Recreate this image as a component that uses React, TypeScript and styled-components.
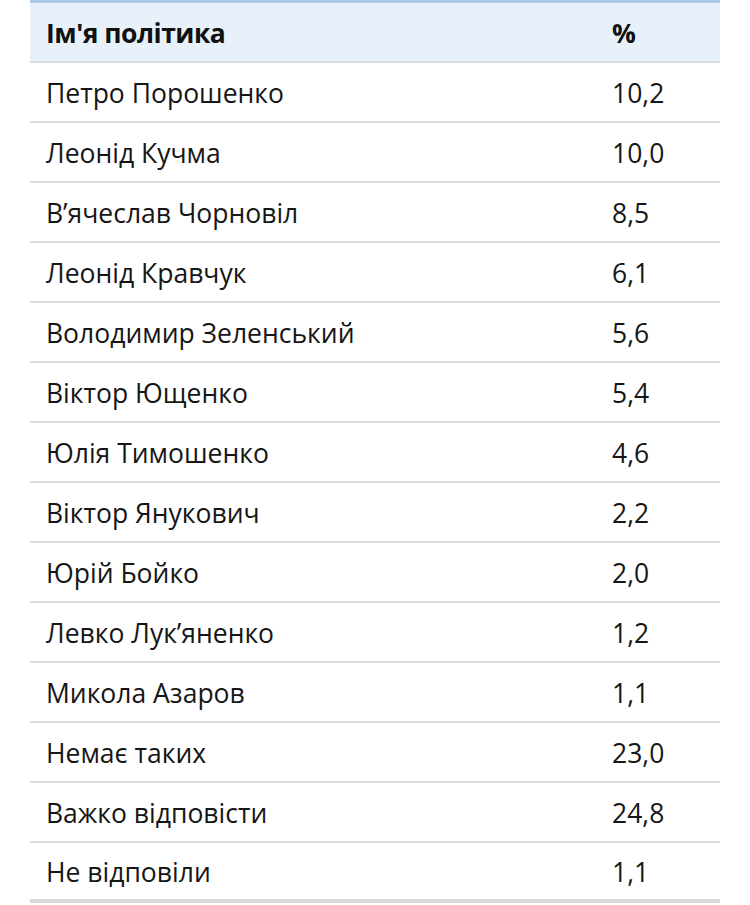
import React from "react";
import styled, { createGlobalStyle } from "styled-components";

const Global = createGlobalStyle`
  html, body { margin: 0; padding: 0; background: #ffffff; }
  body { font-family: "Open Sans", "Noto Sans", sans-serif; }
`;

const Page = styled.div`
  padding: 0 30px;
  background: #ffffff;
`;

const Table = styled.table`
  width: 690px;
  border-collapse: separate;
  border-spacing: 0;
  font-family: "Open Sans", "Noto Sans", sans-serif;
  font-size: 26.5px;
  color: #161616;
`;

const HeadCell = styled.th<{ $w?: number }>`
  background: #e8f1f9;
  text-align: left;
  font-weight: 700;
  letter-spacing: -0.5px;
  color: #111111;
  height: 63px;
  padding: 2px 16px 0;
  box-sizing: border-box;
  border-top: 3px solid #a9cbe8;
  border-bottom: 2px solid #d9dde1;
  width: ${(p) => (p.$w ? `${p.$w}px` : "auto")};
`;

const Cell = styled.td<{ $last?: boolean }>`
  height: 60px;
  padding: 2px 16px 0;
  box-sizing: border-box;
  font-weight: 400;
  border-bottom: ${(p) => (p.$last ? "4px solid #d8d8d8" : "2px solid #dcdcdc")};
`;

const data: [string, string][] = [
  ["Петро Порошенко", "10,2"],
  ["Леонід Кучма", "10,0"],
  ["В’ячеслав Чорновіл", "8,5"],
  ["Леонід Кравчук", "6,1"],
  ["Володимир Зеленський", "5,6"],
  ["Віктор Ющенко", "5,4"],
  ["Юлія Тимошенко", "4,6"],
  ["Віктор Янукович", "2,2"],
  ["Юрій Бойко", "2,0"],
  ["Левко Лук’яненко", "1,2"],
  ["Микола Азаров", "1,1"],
  ["Немає таких", "23,0"],
  ["Важко відповісти", "24,8"],
  ["Не відповіли", "1,1"],
];

export default function App() {
  return (
    <Page>
      <Global />
      <Table>
        <thead>
          <tr>
            <HeadCell $w={566}>Ім'я політика</HeadCell>
            <HeadCell>%</HeadCell>
          </tr>
        </thead>
        <tbody>
          {data.map(([name, pct], i) => {
            const last = i === data.length - 1;
            return (
              <tr key={name}>
                <Cell $last={last}>{name}</Cell>
                <Cell $last={last}>{pct}</Cell>
              </tr>
            );
          })}
        </tbody>
      </Table>
    </Page>
  );
}
